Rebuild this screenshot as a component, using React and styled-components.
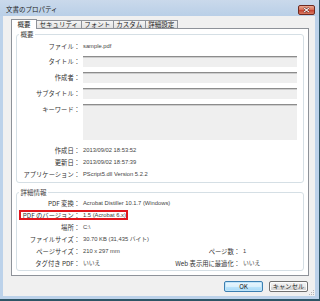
import React from 'react'
import styled, { createGlobalStyle, css } from 'styled-components'

const jp = `"Noto Sans CJK JP", "Noto Sans", sans-serif`
const latin = `"Liberation Sans", "Noto Sans CJK JP", sans-serif`

const GlobalStyle = createGlobalStyle`
  html, body { margin: 0; padding: 0; }
  body { width: 320px; height: 301px; overflow: hidden; background: #fff; }
`

const Window = styled.div`
  width: 320px;
  height: 301px;
  box-sizing: border-box;
  display: flex;
  flex-direction: column;
  background: #bcd2ea;
  border-right: 1px solid #2e5566;
  border-bottom: 2px solid #2e5566;
  font-family: ${jp};
`

const TitleBar = styled.div`
  height: 16px;
  flex: none;
  display: flex;
  align-items: flex-start;
  justify-content: space-between;
  padding-left: 6px;
  background: linear-gradient(#cad9eb, #b9cfe7);
`

const Title = styled.span`
  font-size: 6.5px;
  line-height: 7px;
  margin-top: 6px;
  color: #1b1b1b;
`

const CloseButton = styled.div`
  width: 17px;
  height: 10px;
  margin: 5px 4px 0 0;
  box-sizing: border-box;
  border: 1px solid #6e2a20;
  border-radius: 2px;
  background: linear-gradient(#eba892, #d66a52 50%, #c4402e 51%, #d97a62);
  display: flex;
  align-items: center;
  justify-content: center;
`

const Client = styled.div`
  flex: 1;
  position: relative;
  margin: 0 4px 3px 3px;
  background: #f0f0f0;
  display: flex;
  flex-direction: column;
  padding: 4px 6px 0 8px;
`

const TabStrip = styled.div`
  display: flex;
  align-items: flex-end;
  height: 8px;
  position: relative;
  z-index: 1;
`

const Tab = styled.div`
  height: 8px;
  box-sizing: border-box;
  padding: 0 2.5px;
  margin-left: -1px;
  border: 1px solid #8e9299;
  border-bottom: none;
  background: linear-gradient(#f4f4f4, #e2e2e2);
  font-size: 6.5px;
  line-height: 7px;
  color: #222;
  white-space: nowrap;
  ${p => p.$active && css`
    height: 10px;
    margin: 0 0 -1px 0;
    padding: 1px 5.5px 0;
    background: #fff;
    position: relative;
    z-index: 2;
  `}
`

const Panel = styled.div`
  border: 1px solid #8e9299;
  background: #fff;
  padding: 2px 4px 4px;
  display: flex;
  flex-direction: column;
  gap: 6px;
`

const Group = styled.fieldset`
  margin: 0;
  min-width: 0;
  border: 1px solid #d5dfe5;
  border-radius: 3px;
  padding: ${p => p.$pad};
`

const Legend = styled.legend`
  font-size: 6.5px;
  line-height: 7px;
  padding: 0 1.5px;
  margin-left: 2px;
  color: #3c3c3c;
`

const Label = styled.span`
  width: 63px;
  flex: none;
  text-align: right;
  font-size: 6.3px;
  line-height: 7px;
  color: #333;
  white-space: nowrap;
`

const SideLabel = styled(Label)`
  width: auto;
  margin-left: 4px;
`

const Value = styled.span`
  margin-left: 3px;
  font-family: ${latin};
  font-size: 5.8px;
  line-height: 7px;
  color: #444;
  white-space: nowrap;
  flex: ${p => (p.$w ? 'none' : 1)};
  width: ${p => (p.$w ? `${p.$w}px` : 'auto')};
`

const Row = styled.div`
  display: flex;
  align-items: ${p => (p.$top ? 'flex-start' : 'center')};
  height: ${p => p.$h || 12}px;
  margin-top: ${p => p.$gap || 0}px;
  ${p => p.$top && css`
    & > ${Label} { margin-top: 2px; }
  `}
  ${p => p.$mark && css`
    width: fit-content;
    margin-left: 1px;
    padding-right: 3px;
    outline: 2px solid #e0161d;
    outline-offset: -3px;
    & > ${Label} { width: 62px; }
  `}
`

const Field = styled.div`
  flex: 1;
  align-self: stretch;
  margin-left: 3px;
  background: #efefef;
  border-top: 1px solid #8c8c8c;
  box-shadow: inset 0 1px #cdcdcd;
`

const Footer = styled.div`
  display: flex;
  justify-content: flex-end;
  gap: 6px;
  margin-top: 5px;
  padding-right: 1px;
`

const Button = styled.button`
  width: 39px;
  height: 11px;
  padding: 0;
  box-sizing: border-box;
  border-radius: 2px;
  font-family: ${jp};
  font-size: 6.3px;
  line-height: 8px;
  color: #222;
  border: 1px solid ${p => (p.$primary ? '#3c7fb1' : '#707070')};
  box-shadow: inset 0 0 0 1px ${p => (p.$primary ? '#bfe4f9' : '#fcfcfc')};
  background: ${p => (p.$primary
    ? 'linear-gradient(#eaf6fd, #d9f0fc 50%, #bee6fd 51%, #a7d9f5)'
    : 'linear-gradient(#f2f2f2, #ebebeb 50%, #dddddd 51%, #cfcfcf)')};
`

const Grip = styled.svg`
  position: absolute;
  right: 1px;
  bottom: 1px;
`

const tabs = ['概要', 'セキュリティ', 'フォント', 'カスタム', '詳細設定']

const App = () => {
  return (
    <>
      <GlobalStyle />
      <Window>
        <TitleBar>
          <Title>文書のプロパティ</Title>
          <CloseButton>
            <svg width="7" height="6" viewBox="0 0 7 6">
              <path d="M1 0.8 L6 5.2 M6 0.8 L1 5.2" stroke="#5a1c14" strokeWidth="2" />
              <path d="M1 0.8 L6 5.2 M6 0.8 L1 5.2" stroke="#fff" strokeWidth="1.1" />
            </svg>
          </CloseButton>
        </TitleBar>
        <Client>
          <TabStrip>
            {tabs.map((t, i) => (
              <Tab key={t} $active={i === 0}>{t}</Tab>
            ))}
          </TabStrip>
          <Panel>
            <Group $pad="3px 6px 2px 0">
              <Legend>概要</Legend>
              <Row $h={11}>
                <Label>ファイル：</Label>
                <Value>sample.pdf</Value>
              </Row>
              <Row $h={11} $gap={4}>
                <Label>タイトル：</Label>
                <Field />
              </Row>
              <Row $h={11} $gap={5}>
                <Label>作成者：</Label>
                <Field />
              </Row>
              <Row $h={11} $gap={5}>
                <Label>サブタイトル：</Label>
                <Field />
              </Row>
              <Row $h={36} $gap={5} $top>
                <Label>キーワード：</Label>
                <Field />
              </Row>
              <Row $gap={4}>
                <Label>作成日：</Label>
                <Value>2013/09/02 18:53:52</Value>
              </Row>
              <Row>
                <Label>更新日：</Label>
                <Value>2013/09/02 18:57:39</Value>
              </Row>
              <Row>
                <Label>アプリケーション：</Label>
                <Value>PScript5.dll Version 5.2.2</Value>
              </Row>
            </Group>
            <Group $pad="1px 6px 1px 0">
              <Legend>詳細情報</Legend>
              <Row>
                <Label>PDF 変換：</Label>
                <Value>Acrobat Distiller 10.1.7 (Windows)</Value>
              </Row>
              <Row $mark>
                <Label>PDF のバージョン：</Label>
                <Value>1.5 (Acrobat 6.x)</Value>
              </Row>
              <Row>
                <Label>場所：</Label>
                <Value>C:\</Value>
              </Row>
              <Row>
                <Label>ファイルサイズ：</Label>
                <Value>30.70 KB (31,435 バイト)</Value>
              </Row>
              <Row>
                <Label>ページサイズ：</Label>
                <Value>210 x 297 mm</Value>
                <SideLabel>ページ数：</SideLabel>
                <Value $w={54}>1</Value>
              </Row>
              <Row>
                <Label>タグ付き PDF：</Label>
                <Value>いいえ</Value>
                <SideLabel>Web 表示用に最適化：</SideLabel>
                <Value $w={54}>いいえ</Value>
              </Row>
            </Group>
          </Panel>
          <Footer>
            <Button $primary>OK</Button>
            <Button>キャンセル</Button>
          </Footer>
          <Grip width="5" height="5" viewBox="0 0 5 5">
            <g fill="#b4b4b4">
              <rect x="4" y="0" width="1" height="1" />
              <rect x="2" y="2" width="1" height="1" />
              <rect x="4" y="2" width="1" height="1" />
              <rect x="0" y="4" width="1" height="1" />
              <rect x="2" y="4" width="1" height="1" />
              <rect x="4" y="4" width="1" height="1" />
            </g>
          </Grip>
        </Client>
      </Window>
    </>
  )
}

export default App
